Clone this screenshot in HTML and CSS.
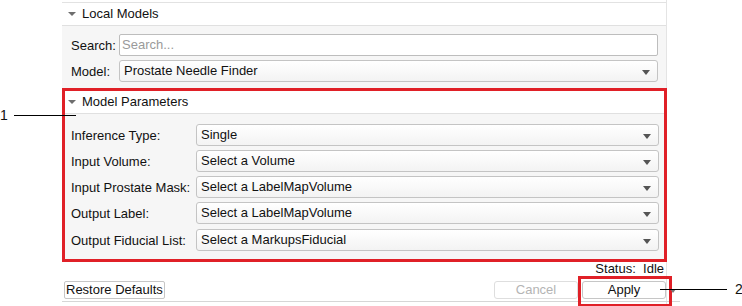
FILE: index.html
```html
<!DOCTYPE html>
<html lang="en">
<head>
  <meta charset="UTF-8" />
  <title>Needle Finder</title>
  <link rel="stylesheet" href="styles.css">
</head>
<body>
  <div class="page">
    <div class="panel">
      <!-- Local Models -->
      <div class="section">
        <div class="section-head"><span class="tri"></span>Local Models</div>
        <div class="section-body">
          <div class="row">
            <label class="lbl short">Search:</label>
            <div class="input">Search...</div>
          </div>
          <div class="row">
            <label class="lbl short">Model:</label>
            <div class="combo">Prostate Needle Finder<span class="arrow"></span></div>
          </div>
        </div>
      </div>

      <!-- Model Parameters -->
      <div class="section highlight">
        <div class="section-head"><span class="tri"></span>Model Parameters</div>
        <div class="section-body params">
          <div class="row">
            <label class="lbl">Inference Type:</label>
            <div class="combo">Single<span class="arrow"></span></div>
          </div>
          <div class="row">
            <label class="lbl">Input Volume:</label>
            <div class="combo">Select a Volume<span class="arrow"></span></div>
          </div>
          <div class="row">
            <label class="lbl">Input Prostate Mask:</label>
            <div class="combo">Select a LabelMapVolume<span class="arrow"></span></div>
          </div>
          <div class="row">
            <label class="lbl">Output Label:</label>
            <div class="combo">Select a LabelMapVolume<span class="arrow"></span></div>
          </div>
          <div class="row">
            <label class="lbl">Output Fiducial List:</label>
            <div class="combo">Select a MarkupsFiducial<span class="arrow"></span></div>
          </div>
        </div>
      </div>

      <div class="status">Status:&nbsp; Idle</div>

      <div class="buttons">
        <button class="btn restore">Restore Defaults</button>
        <div class="spacer"></div>
        <button class="btn cancel" disabled>Cancel</button>
        <div class="apply-wrap">
          <button class="btn apply">Apply</button>
        </div>
        <span class="menu-arrow"></span>
      </div>
    </div>

    <!-- callouts -->
    <div class="callout c1"><span>1</span><i></i></div>
    <div class="callout c2"><i></i><span>2</span></div>
  </div>
</body>
</html>
```

FILE: styles.css
```css
body {
  margin: 0;
  background: #fff;
  font-family: "Liberation Sans", Arial, sans-serif;
  font-size: 13px;
  color: #111;
}

.page {
  position: relative;
  width: 742px;
  height: 306px;
  overflow: hidden;
  padding-left: 62px;
  box-sizing: border-box;
}

.panel {
  width: 605px;
  height: 306px;
  border-right: 1px solid #e4e4e4;
  box-sizing: border-box;
  padding-top: 2px;
}

.section {
  border-top: 1px solid #e2e2e2;
  background: #f6f6f6;
}

.section-head {
  height: 22px;
  line-height: 21px;
  background: #fff;
  border-bottom: 1px solid #e0e0e0;
  padding-left: 20px;
  position: relative;
}

.tri {
  position: absolute;
  left: 6px;
  top: 9px;
  width: 0;
  height: 0;
  border-left: 4px solid transparent;
  border-right: 4px solid transparent;
  border-top: 4px solid #6e6e6e;
}

.section-body {
  padding: 8px 8px 6px 9px;
  display: flex;
  flex-direction: column;
  gap: 4px;
}

.row {
  display: flex;
  align-items: center;
  height: 22px;
}

.lbl {
  width: 125px;
  flex: none;
}
.lbl.short { width: 48px; }

.input,
.combo {
  flex: 1;
  height: 22px;
  box-sizing: border-box;
  border: 1px solid #bdbdbd;
  border-radius: 3px;
  line-height: 20px;
  position: relative;
}

.input {
  background: #fff;
  color: #9a9a9a;
  padding-left: 2px;
  border-radius: 2px;
}

.combo {
  background: linear-gradient(#ffffff, #f3f3f3);
  padding-left: 4px;
  border-color: #c4c4c4;
}

.arrow {
  position: absolute;
  right: 7px;
  top: 9px;
  border-left: 4px solid transparent;
  border-right: 4px solid transparent;
  border-top: 5px solid #555;
}

.highlight {
  border: 3px solid #e02027;
  margin-right: -1px;
}
.highlight .section-head { padding-left: 17px; }
.highlight .tri { left: 3px; }
.highlight .section-body { padding: 10px 5px 8px 6px; }
.highlight .row:last-child { margin-top: 1px; }

.status {
  text-align: right;
  padding-right: 2px;
  height: 14px;
  line-height: 14px;
}

.buttons {
  display: flex;
  align-items: center;
  margin-top: 5px;
  height: 18px;
  border-bottom: 1px solid #d6d6d6;
  padding-bottom: 2px;
  margin-right: -14px;
  padding-right: 14px;
  position: relative;
}

.spacer { flex: 1; }

.btn {
  font-family: "Liberation Sans", Arial, sans-serif;
  font-size: 13px;
  height: 18px;
  padding: 0 1px;
  border: 1px solid #c6c6c6;
  border-radius: 3px;
  background: #fff;
  color: #111;
  line-height: 16px;
  white-space: nowrap;
}

.restore {
  margin-left: 2px;
  border-radius: 2px;
}

.cancel {
  width: 84px;
  color: #b4b4b4;
  border-color: #dedede;
}

.apply-wrap {
  margin-left: 4px;
  position: relative;
}

/* annotation frame round the Apply button */
.apply-wrap::after {
  content: "";
  position: absolute;
  left: -4px;
  right: -6px;
  top: -5px;
  bottom: -8px;
  border: 3px solid #e02027;
  pointer-events: none;
}

.apply {
  width: 84px;
  display: block;
}

.menu-arrow {
  position: absolute;
  right: 4px;
  top: 8px;
  border-left: 3px solid transparent;
  border-right: 3px solid transparent;
  border-top: 4px solid #777;
}

.callout {
  position: absolute;
  display: flex;
  align-items: center;
  font-size: 14px;
}
.callout i {
  display: block;
  height: 1px;
  background: #000;
}
.c1 { left: 0; top: 107px; }
.c1 span { width: 12px; }
.c1 i { width: 62px; margin-left: 2px; }
.c2 { left: 660px; top: 281px; }
.c2 i { width: 67px; margin-right: 8px; }
```
